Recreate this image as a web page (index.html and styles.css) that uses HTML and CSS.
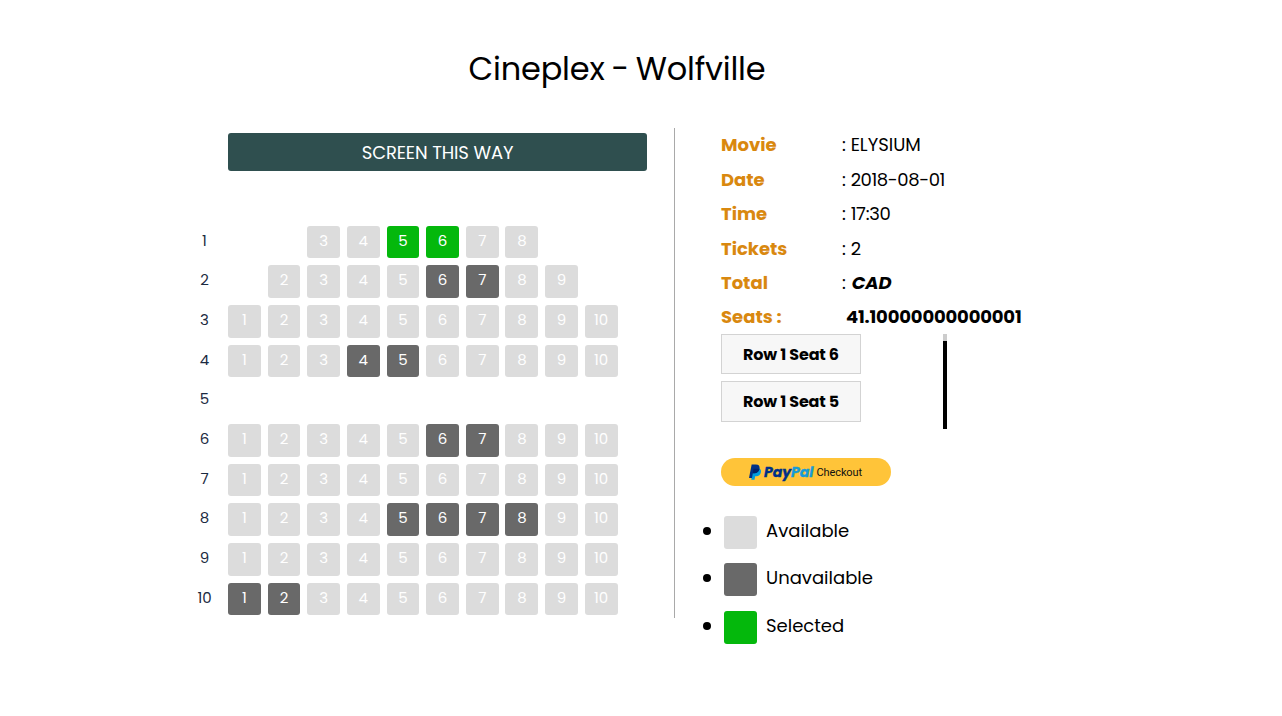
FILE: index.html
```html
<!DOCTYPE html>
<html lang="en">
<head>
<meta charset="utf-8">
<title>Cineplex - Wolfville</title>
<link rel="stylesheet" href="styles.css">
</head>
<body>
<h1 class="title">Cineplex - Wolfville</h1>
<main class="booking">
  <section class="hall">
    <div class="screen"><span>SCREEN THIS WAY</span></div>
    <div class="seat-map" id="seat-map"></div>
  </section>
  <section class="details">
    <dl class="info">
      <dt>Movie</dt><dd>: <span>ELYSIUM</span></dd>
      <dt class="low">Date</dt><dd class="low">: <span class="date">2018-08-01</span></dd>
      <dt>Time</dt><dd>: <span class="time">17:30</span></dd>
      <dt class="low">Tickets</dt><dd class="low">: <span>2</span></dd>
      <dt>Total</dt><dd>: <b class="currency">CAD</b></dd>
      <dt>Seats :</dt><dd><b class="amount">41.10000000000001</b></dd>
    </dl>
    <div class="chosen">
      <ul class="chosen-list">
        <li><span>Row 1 Seat 6</span></li>
        <li><span>Row 1 Seat 5</span></li>
      </ul>
      <div class="scrollbar"></div>
    </div>
    <button class="paypal" type="button">
      <svg class="pp-mark" viewBox="0 0 24 32" aria-hidden="true">
        <path fill="#009cde" d="M20.900 9.200c3 1.700 3.500 4.400 2.800 7.800-1 5-4.200 7.300-9 7.300h-2.400L11 31.500H4.600L7.200 13z"/>
        <path fill="#003087" d="M5.300 1h8.500c5.700 0 8.300 3 7.200 8.500-1.100 6-4.900 8.800-10.400 8.800H7.700L5.900 28H0z"/>
        <path fill="#012169" d="M9 9.500h12c-1.200 6-4.900 8.800-10.400 8.800H7.700z"/>
      </svg>
      <span class="pp-word"><span class="pay">Pay</span><span class="pal">Pal</span></span>
      <span class="pp-checkout">Checkout</span>
    </button>
    <ul class="legend">
      <li><i class="swatch"></i><span>Available</span></li>
      <li><i class="swatch taken"></i><span>Unavailable</span></li>
      <li><i class="swatch selected"></i><span>Selected</span></li>
    </ul>
  </section>
</main>
<script src="seats.js"></script>
</body>
</html>
```
FILE: styles.css
```css
* { box-sizing: border-box; }
body {
  margin: 0;
  background: #fff;
  color: #000;
  font-family: Poppins, Inter, sans-serif;
  font-size: 18px;
}
.title {
  width: 1234px;
  margin: 0;
  padding-top: 45px;
  font-size: 32px;
  font-weight: 400;
  letter-spacing: -0.2px;
  word-spacing: -1.5px;
  line-height: 48px;
  text-align: center;
}
.booking { display: flex; padding: 35px 0 0 181px; }
.hall {
  width: 494px;
  height: 490px;
  padding-top: 5px;
  border-right: 1px solid #a9a9a9;
}
.screen {
  width: 419px;
  height: 38px;
  margin-left: 47px;
  border-radius: 3px;
  background: #2f4f4f;
  color: #fff;
  letter-spacing: -0.13px;
  line-height: 39px;
  text-align: center;
}
.seat-map {
  display: grid;
  grid-template-columns: 47px repeat(10, 39.65px);
  grid-auto-rows: 39.65px;
  padding-top: 54.8px;
  font-size: 15px;
}
.row-label { color: #1b2a41; line-height: 30.4px; text-align: center; }
.seat {
  width: 32.8px;
  height: 32.6px;
  border-radius: 3px;
  background: #dcdcdc;
  color: #fff;
  line-height: 30.4px;
  text-align: center;
}
.seat.taken, .swatch.taken { background: #696969; }
.seat.selected, .swatch.selected { background: #04b80c; }
.details { width: 330px; padding-left: 46px; }
.info {
  display: grid;
  grid-template-columns: 121px 1fr;
  grid-auto-rows: 34.4px;
  margin: 0;
  line-height: 34.4px;
  white-space: nowrap;
}
.info dt { color: #d9880f; font-weight: 700; }
.info dd { margin: 0; }
.info .low { line-height: 36px; }
.date { letter-spacing: -0.4px; }
.time { letter-spacing: -0.3px; }
.currency { padding-left: 1px; font-style: italic; }
.amount { padding-left: 4px; letter-spacing: -0.17px; }
.chosen {
  display: flex;
  justify-content: space-between;
  width: 226px;
  height: 95px;
}
.chosen-list { display: grid; align-content: start; gap: 7px; margin: 0; padding: 0; list-style: none; }
.chosen-list li {
  width: 140px;
  height: 40px;
  border: 1px solid #d3d3d3;
  background: linear-gradient(#888, #888) -1px 18px / 1px 2px no-repeat border-box, #f7f7f7;
  font-size: 16px;
  font-weight: 700;
  letter-spacing: -0.18px;
  line-height: 39px;
  text-align: center;
}
.chosen-list li:last-child { height: 41px; }
.scrollbar { width: 4px; height: 95px; border-top: 7px solid #ccc; background: #000; }
.paypal {
  display: flex;
  align-items: center;
  width: 170px;
  height: 28px;
  margin: 29px 0 0;
  padding: 0 0 0 28px;
  border: 0;
  border-radius: 14px;
  background: #ffc439;
}
.pp-mark { width: 12px; height: 16px; }
.pp-word {
  margin-left: 3px;
  font: italic 700 14px/28px Poppins, "Open Sans", sans-serif;
  -webkit-text-stroke: 0.35px currentColor;
}
.pay { color: #003087; -webkit-text-stroke-color: #003087; }
.pal { color: #179bd7; -webkit-text-stroke-color: #179bd7; }
.pp-checkout { margin-left: 3px; padding-top: 1px; color: #111; font: 11px/28px Roboto, sans-serif; letter-spacing: -0.1px; }
.legend { margin: 29.8px 0 0; padding: 0; list-style: none; }
.legend li { display: flex; align-items: flex-start; height: 47.3px; line-height: 30.4px; }
.legend li::before {
  content: "";
  width: 8px;
  height: 8px;
  margin: 11px 13px 0 -18px;
  border-radius: 50%;
  background: #000;
}
.swatch { width: 33px; height: 33px; margin-right: 9px; border-radius: 3px; background: #dcdcdc; }
```
FILE: seats.js
```js
// Each row runs from its first to its last seat; row 5 is the aisle.
const rows = [
  { from: 3, to: 8, selected: [5, 6] },
  { from: 2, to: 9, taken: [6, 7] },
  { from: 1, to: 10 },
  { from: 1, to: 10, taken: [4, 5] },
  { from: 1, to: 0 },
  { from: 1, to: 10, taken: [6, 7] },
  { from: 1, to: 10 },
  { from: 1, to: 10, taken: [5, 6, 7, 8] },
  { from: 1, to: 10 },
  { from: 1, to: 10, taken: [1, 2] }
];
const map = document.getElementById("seat-map");
rows.forEach((row, i) => {
  const label = document.createElement("div");
  label.className = "row-label";
  label.textContent = i + 1;
  label.style.gridArea = `${i + 1} / 1`;
  map.append(label);
  for (let n = row.from; n <= row.to; n++) {
    const seat = document.createElement("div");
    seat.className = "seat";
    if (row.taken?.includes(n)) seat.classList.add("taken");
    if (row.selected?.includes(n)) seat.classList.add("selected");
    seat.textContent = n;
    seat.style.gridArea = `${i + 1} / ${n + 1}`;
    map.append(seat);
  }
});
```
